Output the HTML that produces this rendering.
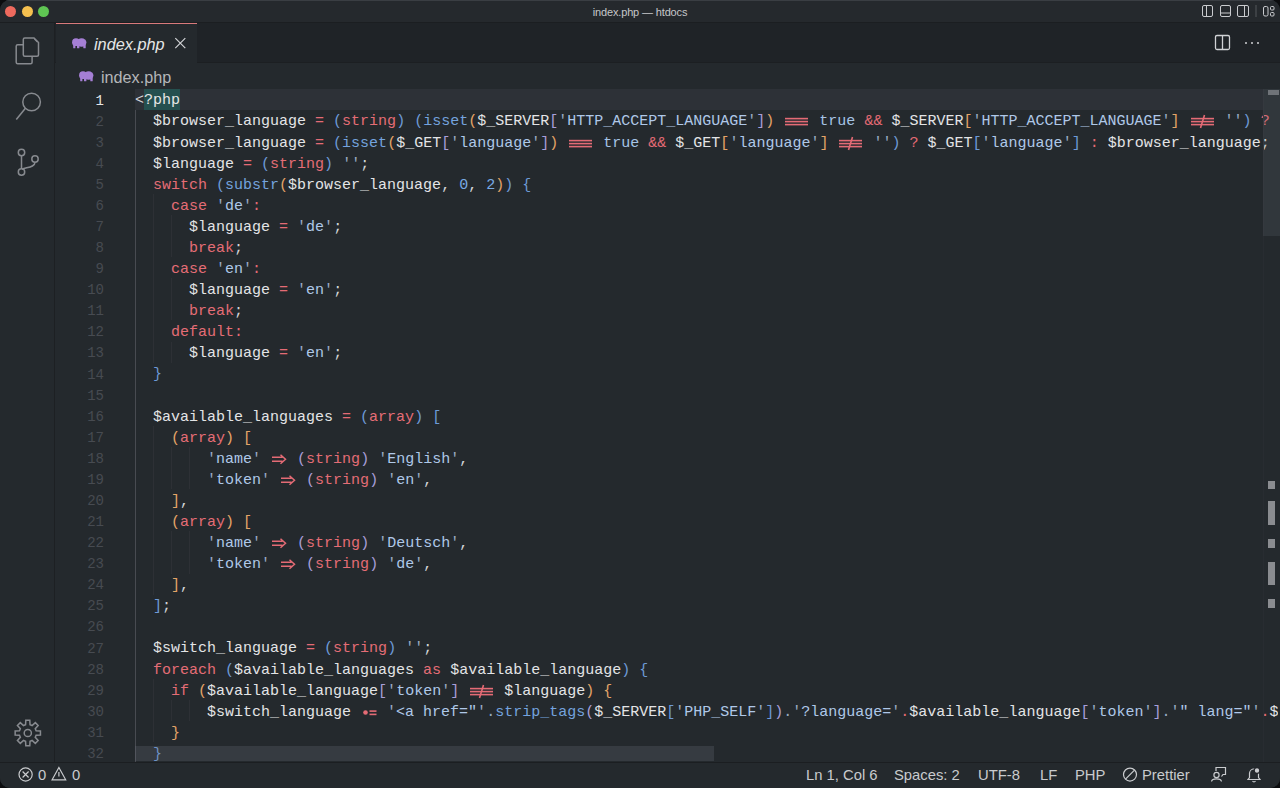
<!DOCTYPE html>
<html><head><meta charset="utf-8">
<style>
*{margin:0;padding:0;box-sizing:border-box}
html,body{width:1280px;height:788px;overflow:hidden;background:#0b0c0e}
body{font-family:"Liberation Sans",sans-serif;position:relative}
svg{position:absolute;overflow:visible}
.win{position:absolute;left:0;top:0;width:1280px;height:788px;border-radius:10px;overflow:hidden;background:#24292d}
.title{position:absolute;left:0;top:0;width:1280px;height:23px;background:#25292d;border-top:1px solid #3a3e43;border-bottom:1.5px solid #1b1e21}
.tl{position:absolute;top:5.4px;width:11px;height:11px;border-radius:50%}
.ttext{position:absolute;left:0;width:1280px;top:5px;text-align:center;font-size:11px;letter-spacing:-0.15px;color:#c5c7ca}
.act{position:absolute;left:0;top:23px;width:55px;height:739px;background:#24292d;border-right:1px solid #1d2023}
.tabs{position:absolute;left:55px;top:23px;width:1225px;height:40px;background:#1f2327;border-bottom:1px solid #1c1f22}
.tab{position:absolute;left:1px;top:0;width:141px;height:40px;background:#24292d;border-top:1px solid #d97a7c}
.tabtxt{position:absolute;left:38px;top:10.5px;font-size:16.3px;font-style:italic;color:#e6e6e6}
.crumb{position:absolute;left:55px;top:63px;width:1225px;height:26px;background:#24292d}
.crumbtxt{position:absolute;left:46px;top:4.5px;font-size:16.2px;color:#b4b6b9}
.editor{position:absolute;left:56px;top:88.5px;width:1224px;height:673px;background:#24292d;overflow:hidden}
.gutter{position:absolute;left:0;top:2px;width:48px}
.gn{height:21.09px;line-height:21.09px;text-align:right;font-family:"Liberation Mono",monospace;font-size:14px;color:#474b51}
.gn.ga{color:#e6e6e6}
.curline{position:absolute;left:79px;top:0;width:1128px;height:21.09px;background:#2d3137}
.guide{position:absolute;width:1px;background:#2f3237}
.code{position:absolute;left:79px;top:1.9px;width:1143px;overflow:hidden;white-space:pre;font-family:"Liberation Mono",monospace;font-size:15px}
.ln{height:21.09px;line-height:21.09px}
.p{color:#d2d4d7}
.v{color:#e3e4e6}
.o{color:#e46b75}
.k{color:#e46d76}
.f{color:#74a3de}
.c{color:#a6c4e6}
.n{color:#78a9e3}
.s{color:#afc8e8}
.q{color:#98a9c2}
.d{color:#98a9c2}
.b0{color:#6e9ad6}
.b1{color:#e3a468}
.b2{color:#a89ed8}
.hl{color:#e6e6e6}
.lig{display:inline-block;position:relative;height:21px;vertical-align:top}
.lig svg{position:absolute;left:0;top:0}
.status{position:absolute;left:0;top:762px;width:1280px;height:26px;background:#24292d;border-top:1.5px solid #1b1e21;font-size:14px;color:#c9cbce}
.st{position:absolute;top:3.6px;font-size:14.8px}
</style></head><body><div class="win">
<div class="title">
  <div class="tl" style="left:5.4px;background:#ee6a5e"></div>
  <div class="tl" style="left:22.2px;background:#f5c04f"></div>
  <div class="tl" style="left:38.4px;background:#5fc553"></div>
  <div class="ttext">index.php — htdocs</div>
  <svg width="1280" height="22" style="left:0;top:-1px" fill="none" stroke="#c9cbce" stroke-width="1">
    <rect x="1202.5" y="5.5" width="10" height="11" rx="1.5"/><line x1="1206.5" y1="5.5" x2="1206.5" y2="16.5"/>
    <rect x="1220.5" y="5.5" width="10" height="11" rx="1.5"/><line x1="1220.5" y1="13" x2="1230.5" y2="13"/>
    <rect x="1237.5" y="5.5" width="11" height="11" rx="1.5"/><line x1="1244.5" y1="5.5" x2="1244.5" y2="16.5"/>
    <line x1="1256" y1="5" x2="1256" y2="17" stroke="#55585d"/>
    <rect x="1263.5" y="6.5" width="4.5" height="9.5" rx="1.5"/>
    <rect x="1270.5" y="6.5" width="3.5" height="3.5" rx="1"/><rect x="1270.5" y="12.5" width="3.5" height="3.5" rx="1"/>
  </svg>
</div>
<div class="act">
  <svg width="55" height="740" style="left:0;top:-1px" fill="none" stroke="#878a8f" stroke-width="1.5">
    <!-- files -->
    <path d="M24.8 16 h9.2 l4.5 4.5 v12.2 a1.5 1.5 0 0 1 -1.5 1.5 h-12.2 a1.5 1.5 0 0 1 -1.5 -1.5 v-15.2 a1.5 1.5 0 0 1 1.5 -1.5z"/>
    <path d="M34.5 17 l3 3" stroke-width="1.2"/>
    <path d="M23.3 22.8 h-5.6 a1.5 1.5 0 0 0 -1.5 1.5 v15.9 a1.5 1.5 0 0 0 1.5 1.5 h12.9 a1.5 1.5 0 0 0 1.5 -1.5 v-5.5"/>
    <!-- search -->
    <circle cx="31.6" cy="80" r="8.8"/>
    <line x1="25.4" y1="86.2" x2="16.3" y2="97.5"/>
    <!-- scm -->
    <circle cx="21.5" cy="130.5" r="3.2"/>
    <circle cx="35" cy="137" r="3.2"/>
    <circle cx="21.5" cy="150" r="3.2"/>
    <path d="M21.5 133.7 v13"/>
    <path d="M35 140.2 c0 5 -8 5 -13 7"/>
  </svg>
  <svg width="55" height="740" style="left:0;top:-1px" fill="none" stroke="#878a8f" stroke-width="1.5">
    <path d="M25.57 702.69 L25.80 698.36 L29.80 698.36 L30.03 702.69 L32.10 703.55 L35.32 700.64 L38.16 703.48 L35.25 706.70 L36.11 708.77 L40.44 709.00 L40.44 713.00 L36.11 713.23 L35.25 715.30 L38.16 718.52 L35.32 721.36 L32.10 718.45 L30.03 719.31 L29.80 723.64 L25.80 723.64 L25.57 719.31 L23.50 718.45 L20.28 721.36 L17.44 718.52 L20.35 715.30 L19.49 713.23 L15.16 713.00 L15.16 709.00 L19.49 708.77 L20.35 706.70 L17.44 703.48 L20.28 700.64 L23.50 703.55Z"/><circle cx="27.8" cy="711" r="3.6"/>
  </svg>
</div>
<div class="tabs">
  <div class="tab"><svg width="16" height="12" style="left:16px;top:13.6px" fill="#a57fd5"><ellipse cx="4" cy="4.2" rx="3.9" ry="3.9"/><ellipse cx="9.6" cy="4.5" rx="4.8" ry="4.2"/><rect x="1.2" y="5" width="2.2" height="5.3" rx="0.6"/><rect x="5" y="6" width="2.4" height="4.3" rx="0.5"/><rect x="11.3" y="6" width="2.4" height="4.3" rx="0.5"/></svg><div class="tabtxt">index.php</div></div>
  <svg width="1225" height="41" style="left:0;top:0" fill="none" stroke="#d0d2d5" stroke-width="1.3">
    <path d="M120.3 15.2 l10 10 M130.3 15.2 l-10 10" stroke-width="1.2"/>
    <rect x="1160.5" y="12.5" width="14" height="14" rx="1.5"/><line x1="1167.5" y1="12.5" x2="1167.5" y2="26.5"/>
    <circle cx="1191" cy="20" r="1" fill="#d0d2d5" stroke="none"/>
    <circle cx="1197" cy="20" r="1" fill="#d0d2d5" stroke="none"/>
    <circle cx="1203" cy="20" r="1" fill="#d0d2d5" stroke="none"/>
  </svg>
</div>
<div class="crumb"><svg width="16" height="12" style="left:24px;top:8px" fill="#a57fd5"><ellipse cx="4" cy="4.2" rx="3.9" ry="3.9"/><ellipse cx="9.6" cy="4.5" rx="4.8" ry="4.2"/><rect x="1.2" y="5" width="2.2" height="5.3" rx="0.6"/><rect x="5" y="6" width="2.4" height="4.3" rx="0.5"/><rect x="11.3" y="6" width="2.4" height="4.3" rx="0.5"/></svg><div class="crumbtxt">index.php</div></div>
<div class="editor">
  <div class="curline"></div><div style="position:absolute;left:88px;top:0.6px;width:36px;height:21px;background:#25504f"></div>
  <div class="gutter"><div class="gn ga">1</div><div class="gn">2</div><div class="gn">3</div><div class="gn">4</div><div class="gn">5</div><div class="gn">6</div><div class="gn">7</div><div class="gn">8</div><div class="gn">9</div><div class="gn">10</div><div class="gn">11</div><div class="gn">12</div><div class="gn">13</div><div class="gn">14</div><div class="gn">15</div><div class="gn">16</div><div class="gn">17</div><div class="gn">18</div><div class="gn">19</div><div class="gn">20</div><div class="gn">21</div><div class="gn">22</div><div class="gn">23</div><div class="gn">24</div><div class="gn">25</div><div class="gn">26</div><div class="gn">27</div><div class="gn">28</div><div class="gn">29</div><div class="gn">30</div><div class="gn">31</div><div class="gn">32</div></div>
  <div class="guide" style="left:79px;top:21.09px;height:653.79px;background:#484b51"></div><div class="guide" style="left:97px;top:105.45px;height:168.72px;background:#2d3035"></div><div class="guide" style="left:115px;top:126.54px;height:42.18px;background:#2d3035"></div><div class="guide" style="left:115px;top:189.81px;height:42.18px;background:#2d3035"></div><div class="guide" style="left:115px;top:253.08px;height:21.09px;background:#2d3035"></div><div class="guide" style="left:97px;top:337.44px;height:168.72px;background:#2d3035"></div><div class="guide" style="left:115px;top:358.53px;height:42.18px;background:#2d3035"></div><div class="guide" style="left:133px;top:358.53px;height:42.18px;background:#2d3035"></div><div class="guide" style="left:115px;top:442.89px;height:42.18px;background:#2d3035"></div><div class="guide" style="left:133px;top:442.89px;height:42.18px;background:#2d3035"></div><div class="guide" style="left:97px;top:590.52px;height:63.27px;background:#2d3035"></div><div class="guide" style="left:115px;top:611.61px;height:21.09px;background:#2d3035"></div><div class="guide" style="left:133px;top:611.61px;height:21.09px;background:#2d3035"></div>
  <div class="code"><div class="ln"><span class="p">&lt;</span><span class="hl">?php</span></div><div class="ln">  <span class="v">$browser_language</span> <span class="o">=</span> <span class="b0">(</span><span class="k">string</span><span class="b0">)</span> <span class="b0">(</span><span class="f">isset</span><span class="b1">(</span><span class="v">$_SERVER</span><span class="b2">[</span><span class="q">'</span><span class="s">HTTP_ACCEPT_LANGUAGE</span><span class="q">'</span><span class="b2">]</span><span class="b1">)</span> <span class="lig" style="width:27px"><svg width="27" height="21"><g fill="#e46b75"><rect x="2" y="6.8" width="23" height="1.6"/><rect x="2" y="9.8" width="23" height="1.6"/><rect x="2" y="12.8" width="23" height="1.6"/></g></svg></span> <span class="c">true</span> <span class="o">&amp;&amp;</span> <span class="v">$_SERVER</span><span class="b1">[</span><span class="q">'</span><span class="s">HTTP_ACCEPT_LANGUAGE</span><span class="q">'</span><span class="b1">]</span> <span class="lig" style="width:27px"><svg width="27" height="21"><g fill="#e46b75"><rect x="2" y="6.8" width="23" height="1.6"/><rect x="2" y="9.8" width="23" height="1.6"/><rect x="2" y="12.8" width="23" height="1.6"/></g><line x1="15.5" y1="4" x2="11.5" y2="17" stroke="#e46b75" stroke-width="1.6"/></svg></span> <span class="q">'</span><span class="s"></span><span class="q">'</span><span class="b0">)</span> <span class="o">?</span> <span class="v">$_SERVER</span><span class="b0">[</span><span class="q">'</span><span class="s">HTTP_ACCEPT_LANGUAGE</span><span class="q">'</span><span class="b0">]</span> <span class="o">:</span> <span class="q">'</span><span class="s"></span><span class="q">'</span><span class="p">;</span></div><div class="ln">  <span class="v">$browser_language</span> <span class="o">=</span> <span class="b0">(</span><span class="f">isset</span><span class="b1">(</span><span class="v">$_GET</span><span class="b2">[</span><span class="q">'</span><span class="s">language</span><span class="q">'</span><span class="b2">]</span><span class="b1">)</span> <span class="lig" style="width:27px"><svg width="27" height="21"><g fill="#e46b75"><rect x="2" y="6.8" width="23" height="1.6"/><rect x="2" y="9.8" width="23" height="1.6"/><rect x="2" y="12.8" width="23" height="1.6"/></g></svg></span> <span class="c">true</span> <span class="o">&amp;&amp;</span> <span class="v">$_GET</span><span class="b1">[</span><span class="q">'</span><span class="s">language</span><span class="q">'</span><span class="b1">]</span> <span class="lig" style="width:27px"><svg width="27" height="21"><g fill="#e46b75"><rect x="2" y="6.8" width="23" height="1.6"/><rect x="2" y="9.8" width="23" height="1.6"/><rect x="2" y="12.8" width="23" height="1.6"/></g><line x1="15.5" y1="4" x2="11.5" y2="17" stroke="#e46b75" stroke-width="1.6"/></svg></span> <span class="q">'</span><span class="s"></span><span class="q">'</span><span class="b0">)</span> <span class="o">?</span> <span class="v">$_GET</span><span class="b0">[</span><span class="q">'</span><span class="s">language</span><span class="q">'</span><span class="b0">]</span> <span class="o">:</span> <span class="v">$browser_language</span><span class="p">;</span></div><div class="ln">  <span class="v">$language</span> <span class="o">=</span> <span class="b0">(</span><span class="k">string</span><span class="b0">)</span> <span class="q">'</span><span class="s"></span><span class="q">'</span><span class="p">;</span></div><div class="ln">  <span class="k">switch</span> <span class="b0">(</span><span class="f">substr</span><span class="b1">(</span><span class="v">$browser_language</span><span class="p">,</span> <span class="n">0</span><span class="p">,</span> <span class="n">2</span><span class="b1">)</span><span class="b0">)</span> <span class="b0">{</span></div><div class="ln">    <span class="k">case</span> <span class="q">'</span><span class="s">de</span><span class="q">'</span><span class="o">:</span></div><div class="ln">      <span class="v">$language</span> <span class="o">=</span> <span class="q">'</span><span class="s">de</span><span class="q">'</span><span class="p">;</span></div><div class="ln">      <span class="k">break</span><span class="p">;</span></div><div class="ln">    <span class="k">case</span> <span class="q">'</span><span class="s">en</span><span class="q">'</span><span class="o">:</span></div><div class="ln">      <span class="v">$language</span> <span class="o">=</span> <span class="q">'</span><span class="s">en</span><span class="q">'</span><span class="p">;</span></div><div class="ln">      <span class="k">break</span><span class="p">;</span></div><div class="ln">    <span class="k">default</span><span class="o">:</span></div><div class="ln">      <span class="v">$language</span> <span class="o">=</span> <span class="q">'</span><span class="s">en</span><span class="q">'</span><span class="p">;</span></div><div class="ln">  <span class="b0">}</span></div><div class="ln"></div><div class="ln">  <span class="v">$available_languages</span> <span class="o">=</span> <span class="b0">(</span><span class="k">array</span><span class="b0">)</span> <span class="b0">[</span></div><div class="ln">    <span class="b1">(</span><span class="k">array</span><span class="b1">)</span> <span class="b1">[</span></div><div class="ln">        <span class="q">'</span><span class="s">name</span><span class="q">'</span> <span class="lig" style="width:18px"><svg width="18" height="21"><g fill="none" stroke="#e46b75" stroke-width="1.5"><path d="M2 8.3 h10.5 M2 12.3 h10.5 M10.5 5.8 l5 4.5 l-5 4.5"/></g></svg></span> <span class="b2">(</span><span class="k">string</span><span class="b2">)</span> <span class="q">'</span><span class="s">English</span><span class="q">'</span><span class="p">,</span></div><div class="ln">        <span class="q">'</span><span class="s">token</span><span class="q">'</span> <span class="lig" style="width:18px"><svg width="18" height="21"><g fill="none" stroke="#e46b75" stroke-width="1.5"><path d="M2 8.3 h10.5 M2 12.3 h10.5 M10.5 5.8 l5 4.5 l-5 4.5"/></g></svg></span> <span class="b2">(</span><span class="k">string</span><span class="b2">)</span> <span class="q">'</span><span class="s">en</span><span class="q">'</span><span class="p">,</span></div><div class="ln">    <span class="b1">]</span><span class="p">,</span></div><div class="ln">    <span class="b1">(</span><span class="k">array</span><span class="b1">)</span> <span class="b1">[</span></div><div class="ln">        <span class="q">'</span><span class="s">name</span><span class="q">'</span> <span class="lig" style="width:18px"><svg width="18" height="21"><g fill="none" stroke="#e46b75" stroke-width="1.5"><path d="M2 8.3 h10.5 M2 12.3 h10.5 M10.5 5.8 l5 4.5 l-5 4.5"/></g></svg></span> <span class="b2">(</span><span class="k">string</span><span class="b2">)</span> <span class="q">'</span><span class="s">Deutsch</span><span class="q">'</span><span class="p">,</span></div><div class="ln">        <span class="q">'</span><span class="s">token</span><span class="q">'</span> <span class="lig" style="width:18px"><svg width="18" height="21"><g fill="none" stroke="#e46b75" stroke-width="1.5"><path d="M2 8.3 h10.5 M2 12.3 h10.5 M10.5 5.8 l5 4.5 l-5 4.5"/></g></svg></span> <span class="b2">(</span><span class="k">string</span><span class="b2">)</span> <span class="q">'</span><span class="s">de</span><span class="q">'</span><span class="p">,</span></div><div class="ln">    <span class="b1">]</span><span class="p">,</span></div><div class="ln">  <span class="b0">]</span><span class="p">;</span></div><div class="ln"></div><div class="ln">  <span class="v">$switch_language</span> <span class="o">=</span> <span class="b0">(</span><span class="k">string</span><span class="b0">)</span> <span class="q">'</span><span class="s"></span><span class="q">'</span><span class="p">;</span></div><div class="ln">  <span class="k">foreach</span> <span class="b0">(</span><span class="v">$available_languages</span> <span class="k">as</span> <span class="v">$available_language</span><span class="b0">)</span> <span class="b0">{</span></div><div class="ln">    <span class="k">if</span> <span class="b1">(</span><span class="v">$available_language</span><span class="b2">[</span><span class="q">'</span><span class="s">token</span><span class="q">'</span><span class="b2">]</span> <span class="lig" style="width:27px"><svg width="27" height="21"><g fill="#e46b75"><rect x="2" y="6.8" width="23" height="1.6"/><rect x="2" y="9.8" width="23" height="1.6"/><rect x="2" y="12.8" width="23" height="1.6"/></g><line x1="15.5" y1="4" x2="11.5" y2="17" stroke="#e46b75" stroke-width="1.6"/></svg></span> <span class="v">$language</span><span class="b1">)</span> <span class="b1">{</span></div><div class="ln">        <span class="v">$switch_language</span> <span class="lig" style="width:18px"><svg width="18" height="21"><circle cx="5.5" cy="10.5" r="2.3" fill="#e46b75"/><g fill="#e46b75"><rect x="9.5" y="8.3" width="7" height="1.6"/><rect x="9.5" y="11.6" width="7" height="1.6"/></g></svg></span> <span class="q">'</span><span class="s">&lt;a href="</span><span class="q">'</span><span class="d">.</span><span class="f">strip_tags</span><span class="b2">(</span><span class="v">$_SERVER</span><span class="b0">[</span><span class="q">'</span><span class="s">PHP_SELF</span><span class="q">'</span><span class="b0">]</span><span class="b2">)</span><span class="d">.</span><span class="q">'</span><span class="s">?language=</span><span class="q">'</span><span class="o">.</span><span class="v">$available_language</span><span class="b2">[</span><span class="q">'</span><span class="s">token</span><span class="q">'</span><span class="b2">]</span><span class="d">.</span><span class="q">'</span><span class="s">" lang="</span><span class="q">'</span><span class="o">.</span><span class="v">$available_language</span><span class="b2">[</span><span class="q">'</span><span class="s">token</span><span class="q">'</span><span class="b2">]</span><span class="d">.</span><span class="q">'</span><span class="s">"&gt;</span><span class="q">'</span><span class="o">.</span><span class="v">$available_language</span><span class="b2">[</span><span class="q">'</span><span class="s">name</span><span class="q">'</span><span class="b2">]</span><span class="d">.</span><span class="q">'</span><span class="s">&lt;/a&gt;</span><span class="q">'</span><span class="p">;</span></div><div class="ln">    <span class="b1">}</span></div><div class="ln">  <span class="b0">}</span></div></div>
  <div style="position:absolute;left:79px;top:657px;width:579px;height:15px;background:rgba(120,125,135,0.22)"></div>
  <div style="position:absolute;left:1207px;top:0;width:1px;height:673px;background:#282c31"></div>
  <div style="position:absolute;left:1207px;top:0;width:17px;height:147.5px;background:rgba(120,125,135,0.17)"></div>
  <div style="position:absolute;left:1212px;top:1px;width:11px;height:5px;background:#6f7378"></div>
  <div style="position:absolute;left:1212px;top:392px;width:7px;height:8px;background:#8a8c90"></div>
  <div style="position:absolute;left:1212px;top:412px;width:7px;height:24px;background:#8a8c90"></div>
  <div style="position:absolute;left:1212px;top:450px;width:7px;height:9px;background:#8a8c90"></div>
  <div style="position:absolute;left:1212px;top:473px;width:7px;height:23px;background:#8a8c90"></div>
  <div style="position:absolute;left:1212px;top:510px;width:7px;height:9px;background:#8a8c90"></div>
</div>
<div class="status">
  <svg width="1280" height="26" style="left:0;top:-1px" fill="none" stroke="#c9cbce" stroke-width="1.2">
    <circle cx="25.6" cy="12.5" r="6.6"/><path d="M22.6 9.5 l6 6 M28.6 9.5 l-6 6"/>
    <path d="M58.9 5.5 l6.8 12.3 h-13.6 z"/><line x1="58.9" y1="10" x2="58.9" y2="14.5"/>
    <circle cx="1130" cy="12.6" r="6.5"/><line x1="1125.5" y1="17.1" x2="1134.5" y2="8.1"/>
    <path d="M1216 9 v-3.5 h9.5 v7 h-2.5 l-1.5 2"/><circle cx="1216.5" cy="13" r="2.6"/><path d="M1211.5 19.5 c0.5 -3.5 9.5 -3.5 10 0"/>
    <path d="M1248 17.5 h12 l-1.5 -2 v-4 a4.5 4.5 0 0 0 -9 0 v4 z"/><path d="M1252.5 19 a1.8 1.8 0 0 0 3 0"/>
    <circle cx="1257" cy="8.5" r="2.8" fill="#c9cbce" stroke="#22252a" stroke-width="1.2"/>
  </svg>
  <div class="st" style="left:38px">0</div>
  <div class="st" style="left:72px">0</div>
  <div class="st" style="left:806px">Ln 1, Col 6</div>
  <div class="st" style="left:894px">Spaces: 2</div>
  <div class="st" style="left:978px">UTF-8</div>
  <div class="st" style="left:1040px">LF</div>
  <div class="st" style="left:1075px">PHP</div>
  <div class="st" style="left:1142px">Prettier</div>
</div>
</div></body></html>
